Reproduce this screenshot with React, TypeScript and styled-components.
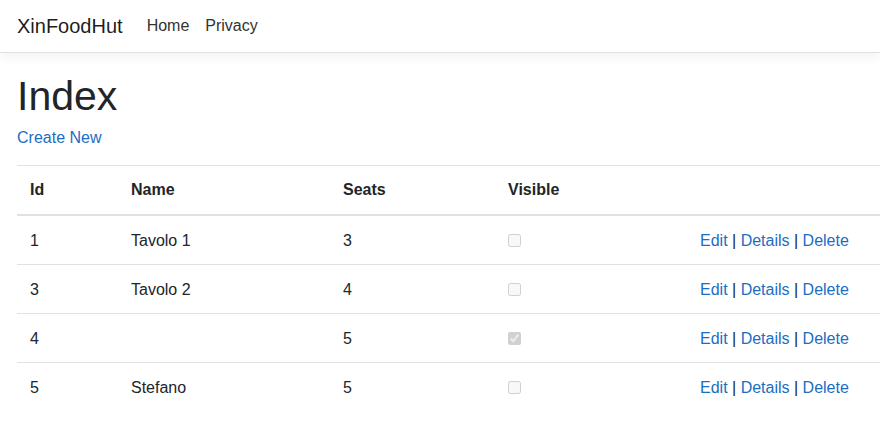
import styled, { createGlobalStyle } from 'styled-components'

/* --------------------- Style --------------------- */
const Global = createGlobalStyle`
  html, body {
    margin: 0;
    padding: 0;
    background: #fff;
    font-family: "Liberation Sans", Arial, sans-serif;
    font-size: 16px;
    color: #212529;
  }
  * { box-sizing: border-box; }
`

const NavBar = styled.header`
  display: flex;
  align-items: center;
  height: 53px;
  padding: 0 17px;
  border-bottom: 1px solid #dee2e6;
  box-shadow: 0 4px 12px rgba(0, 0, 0, 0.05);
  margin-bottom: 19px;
`
const Brand = styled.a`
  font-size: 20px;
  color: rgba(0, 0, 0, 0.9);
  text-decoration: none;
  margin-right: 16px;
`
const NavLink = styled.a`
  color: #333;
  text-decoration: none;
  padding: 0 8px;
`
const Main = styled.main`
  padding-left: 17px;
`
const Title = styled.h1`
  margin: 0 0 8px;
  font-size: 41px;
  font-weight: 500;
  line-height: 1.2;
`
const CreateLink = styled.a`
  display: inline-block;
  color: #1b6ec2;
  text-decoration: none;
  margin-bottom: 18px;
`
const Table = styled.table`
  width: 100%;
  border-collapse: collapse;
  > thead th {
    text-align: left;
    font-weight: 700;
    padding: 12px 13px;
    line-height: 24px;
    border-top: 1px solid #dee2e6;
    border-bottom: 2px solid #dee2e6;
  }
  > tbody td {
    padding: 13px 13px 11px;
    height: 49px;
    line-height: 24px;
    border-bottom: 1px solid #dee2e6;
    vertical-align: top;
  }
  > tbody tr:last-child td {
    border-bottom: none;
  }
`
const Check = styled.input`
  display: block;
  margin: 5px 0 0;
  width: 13px;
  height: 13px;
`
const Action = styled.a`
  color: #1b6ec2;
  text-decoration: none;
`
/* ------------------------------------------------- */

const rows = [
  { id: 1, name: 'Tavolo 1', seats: 3, visible: false },
  { id: 3, name: 'Tavolo 2', seats: 4, visible: false },
  { id: 4, name: '', seats: 5, visible: true },
  { id: 5, name: 'Stefano', seats: 5, visible: false },
]

const App = () => {
  return (
    <>
      <Global />
      <NavBar>
        <Brand href="#">XinFoodHut</Brand>
        <NavLink href="#">Home</NavLink>
        <NavLink href="#">Privacy</NavLink>
      </NavBar>
      <Main>
        <Title>Index</Title>
        <CreateLink href="#">Create New</CreateLink>
        <Table>
          <colgroup>
            <col style={{ width: 101 }} />
            <col style={{ width: 212 }} />
            <col style={{ width: 165 }} />
            <col style={{ width: 192 }} />
            <col />
          </colgroup>
          <thead>
            <tr>
              <th>Id</th>
              <th>Name</th>
              <th>Seats</th>
              <th>Visible</th>
              <th></th>
            </tr>
          </thead>
          <tbody>
            {rows.map((r) => (
              <tr key={r.id}>
                <td>{r.id}</td>
                <td>{r.name}</td>
                <td>{r.seats}</td>
                <td>
                  <Check type="checkbox" checked={r.visible} disabled readOnly />
                </td>
                <td>
                  <Action href="#">Edit</Action> | <Action href="#">Details</Action> |{' '}
                  <Action href="#">Delete</Action>
                </td>
              </tr>
            ))}
          </tbody>
        </Table>
      </Main>
    </>
  )
}
export default App
